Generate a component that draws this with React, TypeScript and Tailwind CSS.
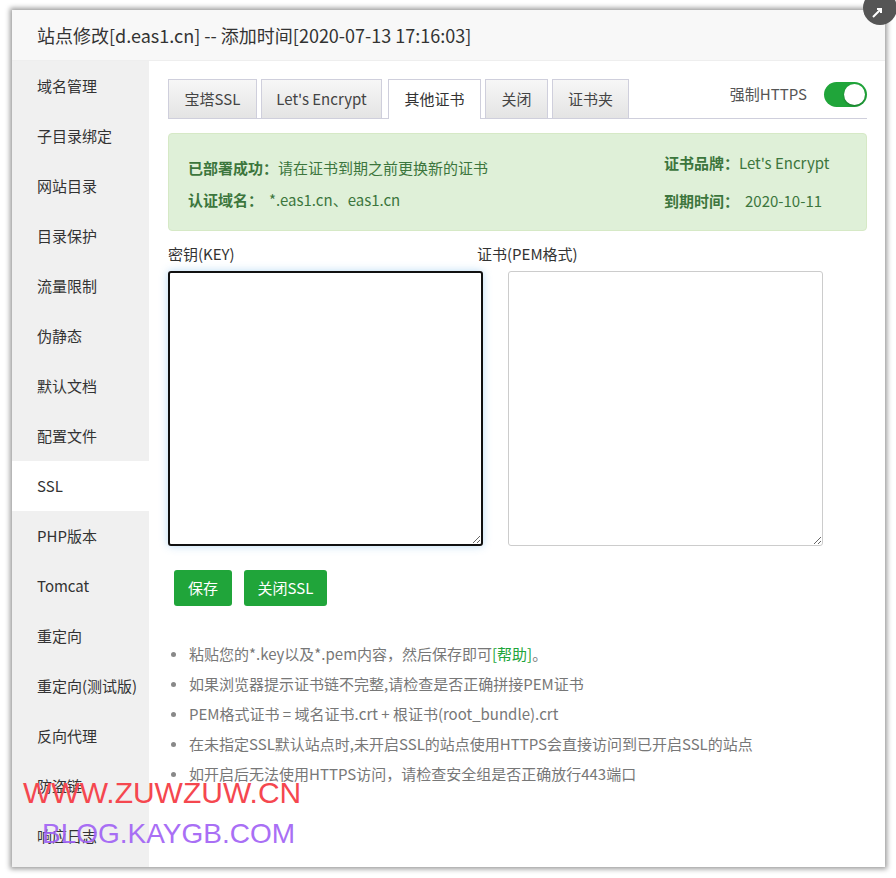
import React from "react";

const FONT = { fontFamily: '"Noto Sans CJK SC", "Noto Sans", sans-serif' };

const menu = [
  "域名管理",
  "子目录绑定",
  "网站目录",
  "目录保护",
  "流量限制",
  "伪静态",
  "默认文档",
  "配置文件",
  "SSL",
  "PHP版本",
  "Tomcat",
  "重定向",
  "重定向(测试版)",
  "反向代理",
  "防盗链",
  "响应日志",
];

const tabs = [
  { label: "宝塔SSL", w: "w-[89px]" },
  { label: "Let's Encrypt", w: "w-[121px]" },
  { label: "其他证书", w: "w-[93px]", active: true },
  { label: "关闭", w: "w-[63px]" },
  { label: "证书夹", w: "w-[77px]" },
];

function Sidebar() {
  return (
    <div className="w-[137px] shrink-0 bg-[#f0f0f0] flex flex-col">
      {menu.map((m) => (
        <div
          key={m}
          className={`h-[50px] flex items-center pl-[25px] text-[15px] text-[#333] ${
            m === "SSL" ? "bg-white" : ""
          }`}
        >
          {m}
        </div>
      ))}
    </div>
  );
}

function Tabs() {
  return (
    <div className="flex items-end h-[40px] border-b border-[#cfcfdc] mr-[18px] relative">
      <div className="flex items-end gap-[4px]">
        {tabs.map((t) => (
          <div
            key={t.label}
            className={`${t.w} h-[39px] flex items-center justify-center text-[15px] border border-b-0 border-[#cfcfdc] ${
              t.active
                ? "bg-white text-[#333] h-[40px] -mb-px ml-[2px]"
                : "bg-gradient-to-b from-[#f7f7f7] to-[#e4e4e4] text-[#444]"
            }`}
          >
            {t.label}
          </div>
        ))}
      </div>
      <div className="ml-auto flex items-center gap-[17px] self-start pt-[3px]">
        <span className="text-[15px] text-[#555]">强制HTTPS</span>
        <div className="w-[43px] h-[25px] rounded-full bg-[#20a53a] relative">
          <div className="absolute right-[2px] top-[2px] w-[21px] h-[21px] rounded-full bg-white shadow-[0_1px_2px_rgba(0,0,0,0.3)]" />
        </div>
      </div>
    </div>
  );
}

function Alert() {
  return (
    <div className="mt-[14px] mr-[18px] h-[98px] rounded-[4px] bg-[#dff0d8] border border-[#d6e9c6] text-[#3c763d] text-[15px] flex pl-[19px] pt-[24px]">
      <div className="flex flex-col gap-[11px] w-[476px]">
        <div className="h-[21px] flex items-center">
          <b className="font-bold">已部署成功：</b>
          <span>请在证书到期之前更换新的证书</span>
        </div>
        <div className="h-[21px] flex items-center">
          <b className="font-bold">认证域名：</b>
          <span className="ml-[6px]">*.eas1.cn、eas1.cn</span>
        </div>
      </div>
      <div className="flex flex-col gap-[11px] -mt-[5px]">
        <div className="h-[21px] flex items-center">
          <b className="font-bold">证书品牌：</b>
          <span>Let's Encrypt</span>
        </div>
        <div className="h-[21px] flex items-center mt-[6px]">
          <b className="font-bold">到期时间：</b>
          <span className="ml-[6px]">2020-10-11</span>
        </div>
      </div>
    </div>
  );
}

function Editors() {
  return (
    <div className="flex mt-[12px]">
      <div className="w-[309px] flex flex-col">
        <div className="h-[22px] text-[15px] text-[#333] leading-[22px]">密钥(KEY)</div>
        <textarea
          className="mt-[6px] w-[315px] h-[275px] border-2 border-[#111] rounded-[3px] shadow-[0_0_8px_rgba(102,175,233,0.45)] outline-none resize"
          defaultValue=""
        />
      </div>
      <div className="flex flex-col">
        <div className="h-[22px] text-[15px] text-[#333] leading-[22px]">证书(PEM格式)</div>
        <textarea
          className="mt-[6px] ml-[31px] w-[315px] h-[275px] border border-[#ccc] rounded-[3px] outline-none resize"
          defaultValue=""
        />
      </div>
    </div>
  );
}

function Buttons() {
  return (
    <div className="flex gap-[12px] mt-[24px] ml-[6px]">
      <button className="w-[58px] h-[36px] rounded-[3px] bg-[#20a53a] text-white text-[15px]">保存</button>
      <button className="w-[83px] h-[36px] rounded-[3px] bg-[#20a53a] text-white text-[15px]">关闭SSL</button>
    </div>
  );
}

function Tips() {
  const items: React.ReactNode[] = [
    <>
      粘贴您的*.key以及*.pem内容，然后保存即可<span className="text-[#20a53a]">[帮助]</span>。
    </>,
    "如果浏览器提示证书链不完整,请检查是否正确拼接PEM证书",
    "PEM格式证书 = 域名证书.crt + 根证书(root_bundle).crt",
    "在未指定SSL默认站点时,未开启SSL的站点使用HTTPS会直接访问到已开启SSL的站点",
    "如开启后无法使用HTTPS访问，请检查安全组是否正确放行443端口",
  ];
  return (
    <ul className="mt-[33px] flex flex-col">
      {items.map((it, i) => (
        <li key={i} className="h-[30px] flex items-center text-[15px] text-[#777]">
          <span className="w-[5px] h-[5px] rounded-full bg-[#888] ml-[3px] mr-[13px]" />
          <span>{it}</span>
        </li>
      ))}
    </ul>
  );
}

export default function App() {
  return (
    <div
      className="w-[896px] h-[878px] bg-white relative overflow-hidden pt-[10px] pl-[12px]"
      style={FONT}
    >
      <div className="w-[873px] h-[857px] bg-white flex flex-col shadow-[0_0_5px_2px_rgba(0,0,0,0.4)] relative">
        <div className="h-[51px] shrink-0 bg-[#f8f8f8] border-b border-[#eee] flex items-center pl-[25px] text-[18px] text-[#333]">
          站点修改[d.eas1.cn] -- 添加时间[2020-07-13 17:16:03]
        </div>
        <div className="flex flex-1 overflow-hidden">
          <Sidebar />
          <div className="flex-1 pl-[19px] pt-[18px] flex flex-col">
            <Tabs />
            <Alert />
            <Editors />
            <Buttons />
            <Tips />
          </div>
        </div>
        <div className="absolute -right-[12px] -top-[19px] w-[34px] h-[34px] rounded-full bg-[#555] flex items-center justify-center">
          <svg width="14" height="14" viewBox="0 0 14 14" className="translate-x-[-3px] translate-y-[5px]">
            <path d="M3 11 L11 3 M7 3 H11 V7" stroke="#fff" strokeWidth="2" fill="none" />
          </svg>
        </div>
      </div>
      <div
        className="absolute left-[23px] top-[778px] text-[30px] font-medium text-[#f5474f] leading-none"
        style={{ fontFamily: '"Liberation Sans", Arial, sans-serif' }}
      >
        WWW.ZUWZUW.CN
      </div>
      <div
        className="absolute left-[42px] top-[820px] text-[28px] text-[#a060f5] leading-none opacity-90"
        style={{ fontFamily: '"Liberation Sans", Arial, sans-serif' }}
      >
        BLOG.KAYGB.COM
      </div>
    </div>
  );
}
